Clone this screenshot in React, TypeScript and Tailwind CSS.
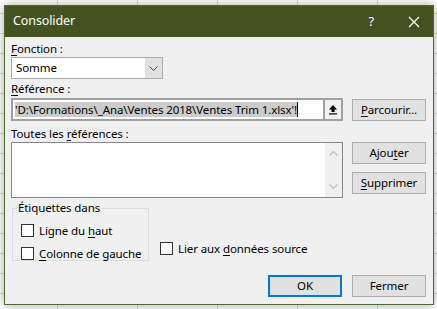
import React from 'react';

const font = { fontFamily: '"Noto Sans", "Liberation Sans", sans-serif' };

function Btn({ children, primary = false }: { children: React.ReactNode; primary?: boolean }) {
    return (
        <div
            className={`flex h-[22px] w-[74px] items-center justify-center bg-[#e1e1e1] text-[11.5px] text-black ${
                primary ? 'border-2 border-[#0078d7]' : 'border border-[#adadad]'
            }`}
        >
            {children}
        </div>
    );
}

function Check({ children }: { children: React.ReactNode }) {
    return (
        <div className="flex items-center gap-[5px]">
            <div className="h-[13px] w-[13px] border border-[#333333] bg-white" />
            <span>{children}</span>
        </div>
    );
}

function Mn({ children }: { children: React.ReactNode }) {
    return <span className="underline underline-offset-2">{children}</span>;
}

export default function App() {
    return (
        <div
            className="h-[309px] w-[437px] overflow-hidden bg-white bg-[linear-gradient(to_right,#d9d9d9_1px,transparent_1px),linear-gradient(to_bottom,#d9d9d9_1px,transparent_1px)] bg-size-[80px_20px] bg-position-[57px_13px] pt-[5px] pl-[4px]"
            style={font}
        >
            <div className="flex h-[300px] w-[430px] flex-col border border-[#4f6a2b] bg-[#f0f0f0] text-[11.5px] tracking-[-0.1px] text-black shadow-[0_0_10px_rgba(0,0,0,0.35)]">
                <div className="flex h-[31px] shrink-0 items-center bg-[#435221] pl-[8px] text-white">
                    <span className="text-[12.5px]">Consolider</span>
                    <span className="ml-auto mr-[34px] text-[13px]">?</span>
                    <svg width="12" height="12" viewBox="0 0 12 12" className="mr-[13px]">
                        <path d="M1 1L11 11M11 1L1 11" stroke="white" strokeWidth="1.2" />
                    </svg>
                </div>

                <div className="flex flex-1 flex-col pr-[7px] pl-[6px]">
                    <div className="mt-[4px] h-[16px] leading-[16px]">
                        <Mn>F</Mn>onction :
                    </div>
                    <div className="flex h-[22px] w-[152px] border border-[#adadad] bg-white">
                        <span className="flex-1 pl-[4px] leading-[20px]">Somme</span>
                        <div className="flex w-[17px] items-center justify-center bg-[#e1e1e1]">
                            <svg width="9" height="5" viewBox="0 0 9 5">
                                <path d="M0.5 0.5L4.5 4.5L8.5 0.5" fill="none" stroke="#555" strokeWidth="1" />
                            </svg>
                        </div>
                    </div>
                    <div className="mt-[2px] h-[16px] leading-[16px]">
                        <Mn>R</Mn>éférence :
                    </div>

                    <div className="mt-[1px] flex items-center gap-[9px]">
                        <div className="flex h-[23px] w-[332px] border-2 border-[#a0a0a0] bg-white">
                            <div className="flex flex-1 items-center pl-[2px]">
                                <span className="bg-[#cccccc] leading-[15px] whitespace-nowrap">
                                    'D:\Formations\_Ana\Ventes 2018\Ventes Trim 1.xlsx'!
                                </span>
                                <span className="h-[15px] w-px bg-black" />
                            </div>
                            <div className="flex w-[18px] items-center justify-center border-l-2 border-[#a0a0a0] bg-[#f0f0f0]">
                                <svg width="10" height="11" viewBox="0 0 10 11">
                                    <path d="M5 1L1 5.5H3.5V8H6.5V5.5H9Z" fill="black" />
                                    <rect x="1" y="9.3" width="8" height="1.2" fill="black" />
                                </svg>
                            </div>
                        </div>
                        <Btn>
                            <span>
                                <Mn>P</Mn>arcourir...
                            </span>
                        </Btn>
                    </div>

                    <div className="mt-[5px] h-[16px] leading-[16px]">
                        Toutes les <Mn>r</Mn>éférences :
                    </div>
                    <div className="flex gap-[9px]">
                        <div className="flex h-[56px] w-[332px] border border-[#828790] bg-white">
                            <div className="flex-1" />
                            <div className="flex w-[17px] flex-col items-center justify-between bg-[#f0f0f0] py-[8px]">
                                <svg width="9" height="5" viewBox="0 0 9 5">
                                    <path d="M0.5 4.5L4.5 0.5L8.5 4.5" fill="none" stroke="#c0c0c0" strokeWidth="1.3" />
                                </svg>
                                <svg width="9" height="5" viewBox="0 0 9 5">
                                    <path d="M0.5 0.5L4.5 4.5L8.5 0.5" fill="none" stroke="#c0c0c0" strokeWidth="1.3" />
                                </svg>
                            </div>
                        </div>
                        <div className="flex flex-col gap-[8px]">
                            <Btn>
                                <span>
                                    Ajou<Mn>t</Mn>er
                                </span>
                            </Btn>
                            <Btn>
                                <span>
                                    <Mn>S</Mn>upprimer
                                </span>
                            </Btn>
                        </div>
                    </div>

                    <div className="mt-[10px] flex items-end gap-[11px]">
                        <div className="relative ml-[1px] h-[53px] w-[137px] border border-[#dcdcdc] pt-[7px] pl-[8px]">
                            <span className="absolute -top-[9px] left-[4px] bg-[#f0f0f0] px-[1px] leading-[16px]">
                                Étiquettes dans
                            </span>
                            <div className="mt-[6px] flex flex-col gap-[6px]">
                                <Check>
                                    Ligne du <Mn>h</Mn>aut
                                </Check>
                                <Check>
                                    <Mn>C</Mn>olonne de gauche
                                </Check>
                            </div>
                        </div>
                        <div className="mb-[4px]">
                            <Check>
                                Lier aux <Mn>d</Mn>onnées source
                            </Check>
                        </div>
                    </div>

                    <div className="mt-[14px] flex justify-end gap-[10px]">
                        <Btn primary>OK</Btn>
                        <Btn>Fermer</Btn>
                    </div>
                </div>
            </div>
        </div>
    );
}
